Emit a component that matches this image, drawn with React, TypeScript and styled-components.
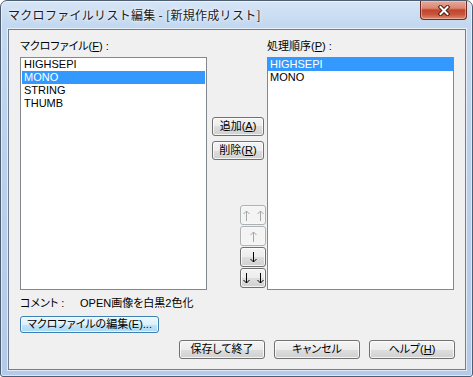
import React from "react";
import styled, { createGlobalStyle } from "styled-components";

const Global = createGlobalStyle`
  html, body { margin: 0; padding: 0; background: #ffffff; }
  body { width: 473px; height: 377px; overflow: hidden; }
  #root { width: 473px; height: 377px; }
`;

const UI_FONT = `"Liberation Sans", "Noto Sans CJK JP", sans-serif`;

const Window = styled.div`
  box-sizing: border-box;
  width: 473px;
  height: 377px;
  display: flex;
  flex-direction: column;
  border: 1px solid #4d5e72;
  border-radius: 7px 7px 3px 3px;
  background: linear-gradient(180deg, #d6e5f6 0px, #c4d9f0 22px, #bbd2ec 140px, #b3cbe8 100%);
  box-shadow: inset 0 0 0 1px rgba(255, 255, 255, 0.55);
  overflow: hidden;
  font-family: ${UI_FONT};
  font-feature-settings: "palt";
`;

const TitleBar = styled.div`
  flex: none;
  height: 28px;
  display: flex;
  align-items: flex-start;
`;

const Title = styled.div`
  margin: 6px 0 0 7px;
  font-family: "Noto Sans CJK JP", sans-serif;
  font-feature-settings: normal;
  font-size: 12px;
  letter-spacing: 0.3px;
  line-height: 16px;
  color: #1a1a1a;
  white-space: nowrap;
  text-shadow: 0 0 6px rgba(255, 255, 255, 0.95), 0 0 3px rgba(255, 255, 255, 0.9);
`;

const CloseButton = styled.div`
  box-sizing: border-box;
  margin: 0 5px 0 auto;
  width: 47px;
  height: 19px;
  border: 1px solid #6e2a1e;
  border-top: none;
  border-radius: 0 0 4px 4px;
  background: linear-gradient(180deg, #e8a99b 0%, #d98672 40%, #c2442c 50%, #c9553d 75%, #de8c6f 100%);
  box-shadow: inset 0 0 0 1px rgba(255, 220, 210, 0.45);
  display: flex;
  align-items: center;
  justify-content: center;
`;

const Client = styled.div`
  flex: 1;
  margin: 0 6px 6px 7px;
  border: 1px solid #6f7f91;
  background: #f0f0f0;
  box-shadow: 0 0 0 1px rgba(255, 255, 255, 0.6);
  padding: 9px 10px 10px 11px;
  display: flex;
  flex-direction: column;
  font-size: 11px;
  color: #000;
`;

const ListsGrid = styled.div`
  display: grid;
  grid-template-columns: 187px 60px 187px;
  grid-template-rows: 14px 233px;
  row-gap: 4px;
`;

const Label = styled.div<{ $col: number }>`
  grid-column: ${(p) => p.$col};
  grid-row: 1;
  line-height: 14px;
  white-space: nowrap;
`;

const ListBox = styled.div<{ $col: number; $inset: number }>`
  box-sizing: border-box;
  grid-column: ${(p) => p.$col};
  grid-row: 2;
  border: 1px solid #828790;
  background: #ffffff;
  padding: 0 ${(p) => p.$inset}px;
  display: flex;
  flex-direction: column;
`;

const Row = styled.div<{ $selected?: boolean }>`
  height: 13px;
  line-height: 13px;
  padding-left: 2px;
  white-space: nowrap;
  background: ${(p) => (p.$selected ? "#3399ff" : "transparent")};
  color: ${(p) => (p.$selected ? "#ffffff" : "#000000")};
`;

const Middle = styled.div`
  grid-column: 2;
  grid-row: 2;
  display: flex;
  flex-direction: column;
  align-items: flex-start;
  padding-top: 60px;
`;

type Variant = "normal" | "focus" | "disabled";

const backgrounds: Record<Variant, string> = {
  normal: "linear-gradient(180deg, #f4f4f4 0%, #ececec 50%, #dedede 50%, #d0d0d0 100%)",
  focus: "linear-gradient(180deg, #ecf7fd 0%, #dcf1fc 50%, #c1e6fc 50%, #a9d9f4 100%)",
  disabled: "#f4f4f4",
};
const borders: Record<Variant, string> = {
  normal: "#707070",
  focus: "#3c7fb1",
  disabled: "#adb2b5",
};

const PushButton = styled.div<{ $w: number; $h: number; $variant?: Variant }>`
  box-sizing: border-box;
  flex: none;
  width: ${(p) => p.$w}px;
  height: ${(p) => p.$h}px;
  border: 1px solid ${(p) => borders[p.$variant ?? "normal"]};
  border-radius: 3px;
  background: ${(p) => backgrounds[p.$variant ?? "normal"]};
  box-shadow: inset 0 0 0 1px rgba(255, 255, 255, ${(p) => (p.$variant === "disabled" ? 0.4 : 0.75)});
  color: ${(p) => (p.$variant === "disabled" ? "#a6a6a6" : "#000000")};
  font-size: 11px;
  line-height: 13px;
  display: flex;
  align-items: center;
  justify-content: center;
  white-space: nowrap;
`;

const SideButton = styled(PushButton)<{ $gap: number }>`
  margin: ${(p) => p.$gap}px 0 0 5px;
`;

const ArrowGroup = styled.div`
  margin: auto 1px 2px 0;
  align-self: flex-end;
  display: flex;
  flex-direction: column;
  gap: 1px;
`;

const ArrowSet = styled.span`
  display: flex;
  align-items: center;
  gap: 7px;
`;

const Acc = styled.u`
  text-decoration-thickness: 1px;
  text-underline-offset: 1px;
`;

const CommentRow = styled.div`
  margin-top: 7px;
  height: 13px;
  line-height: 13px;
  display: flex;
  white-space: nowrap;
`;

const CommentLabel = styled.span`
  width: 60px;
  flex: none;
`;

const EditRow = styled.div`
  margin-top: 6px;
  display: flex;
`;

const Footer = styled.div`
  margin-top: 7px;
  display: flex;
  justify-content: flex-end;
  gap: 9px;
`;

const CloseGlyph = () => (
  <svg width="12" height="11" viewBox="0 0 12 11">
    <path d="M2.5 2 L9.5 9 M9.5 2 L2.5 9" stroke="#4a1a12" strokeWidth="4" strokeLinecap="square" />
    <path d="M2.5 2 L9.5 9 M9.5 2 L2.5 9" stroke="#ffffff" strokeWidth="2" strokeLinecap="square" />
  </svg>
);

const ArrowIcon = ({ down }: { down?: boolean }) => (
  <svg
    width="7"
    height="11"
    viewBox="0 0 7 11"
    style={down ? { transform: "scaleY(-1)" } : undefined}
  >
    <path
      d="M3.5 1 V11 M0.5 4 L3.5 1 L6.5 4"
      fill="none"
      stroke="currentColor"
      strokeWidth="1"
    />
  </svg>
);

const ArrowButton = ({ count, down, disabled }: { count: number; down?: boolean; disabled?: boolean }) => (
  <PushButton $w={26} $h={20} $variant={disabled ? "disabled" : "normal"}>
    <ArrowSet>
      {Array.from({ length: count }, (_, i) => (
        <ArrowIcon key={i} down={down} />
      ))}
    </ArrowSet>
  </PushButton>
);

export default function App() {
  return (
    <>
      <Global />
      <Window>
        <TitleBar>
          <Title>マクロファイルリスト編集 - [新規作成リスト]</Title>
          <CloseButton>
            <CloseGlyph />
          </CloseButton>
        </TitleBar>
        <Client>
          <ListsGrid>
            <Label $col={1}>
              マクロファイル(<Acc>F</Acc>) :
            </Label>
            <Label $col={3}>
              処理順序(<Acc>P</Acc>) :
            </Label>
            <ListBox $col={1} $inset={1}>
              <Row>HIGHSEPI</Row>
              <Row $selected>MONO</Row>
              <Row>STRING</Row>
              <Row>THUMB</Row>
            </ListBox>
            <Middle>
              <SideButton $w={52} $h={19} $gap={0}>
                <span>
                  追加(<Acc>A</Acc>)
                </span>
              </SideButton>
              <SideButton $w={52} $h={19} $gap={5}>
                <span>
                  削除(<Acc>R</Acc>)
                </span>
              </SideButton>
              <ArrowGroup>
                <ArrowButton count={2} disabled />
                <ArrowButton count={1} disabled />
                <ArrowButton count={1} down />
                <ArrowButton count={2} down />
              </ArrowGroup>
            </Middle>
            <ListBox $col={3} $inset={0}>
              <Row $selected>HIGHSEPI</Row>
              <Row>MONO</Row>
            </ListBox>
          </ListsGrid>
          <CommentRow>
            <CommentLabel>コメント :</CommentLabel>
            <span>OPEN画像を白黒2色化</span>
          </CommentRow>
          <EditRow>
            <PushButton $w={139} $h={17} $variant="focus">
              <span>マクロファイルの編集(E)...</span>
            </PushButton>
          </EditRow>
          <Footer>
            <PushButton $w={86} $h={19}>
              <span>保存して終了</span>
            </PushButton>
            <PushButton $w={86} $h={19}>
              <span>キャンセル</span>
            </PushButton>
            <PushButton $w={86} $h={19}>
              <span>
                ヘルプ(<Acc>H</Acc>)
              </span>
            </PushButton>
          </Footer>
        </Client>
      </Window>
    </>
  );
}
